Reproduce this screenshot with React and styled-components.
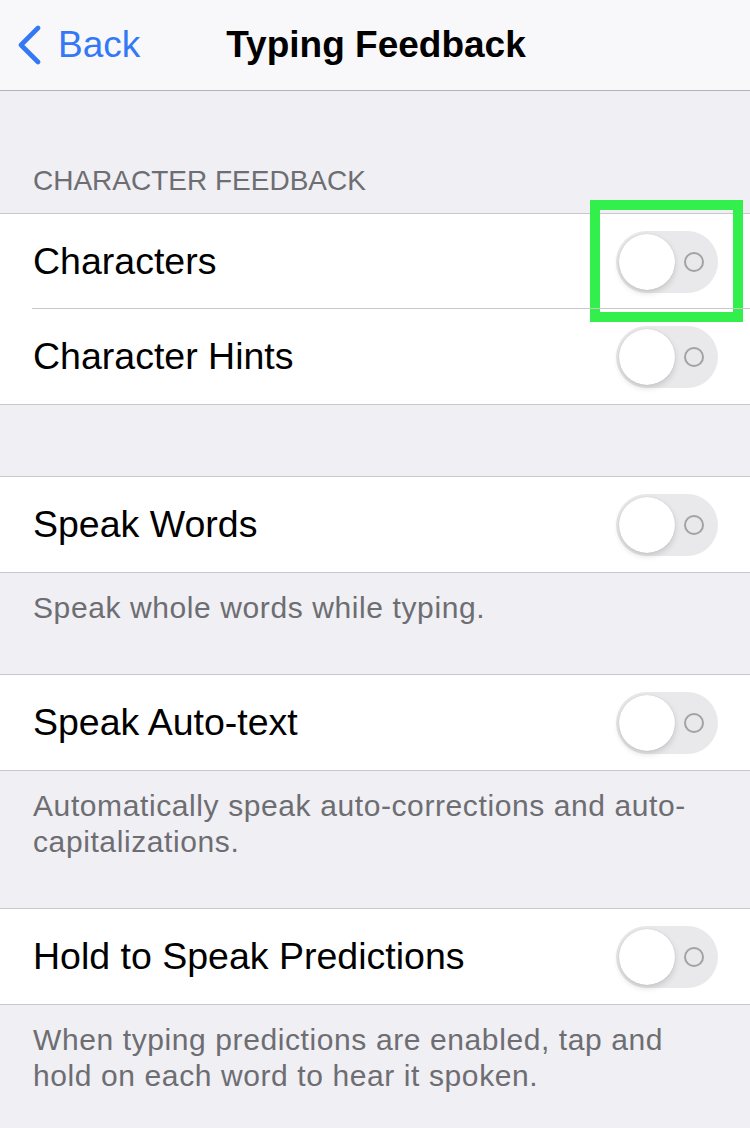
import React from "react";
import styled, { createGlobalStyle } from "styled-components";

const GlobalStyle = createGlobalStyle`
  html, body {
    margin: 0;
    padding: 0;
    background: #efeff4;
  }
  body {
    font-family: "Liberation Sans", Arial, sans-serif;
    -webkit-font-smoothing: antialiased;
  }
`;

const sections = [
  {
    header: "CHARACTER FEEDBACK",
    rows: [{ label: "Characters", highlight: true }, { label: "Character Hints" }],
  },
  {
    rows: [{ label: "Speak Words" }],
    footer: "Speak whole words while typing.",
  },
  {
    rows: [{ label: "Speak Auto-text" }],
    footer: "Automatically speak auto-corrections and auto-capitalizations.",
  },
  {
    rows: [{ label: "Hold to Speak Predictions" }],
    footer:
      "When typing predictions are enabled, tap and hold on each word to hear it spoken.",
  },
];

const App = () => {
  return (
    <Page>
      <GlobalStyle />
      <NavBar>
        <BackButton>
          <svg width="26" height="40" viewBox="0 0 26 40">
            <path
              d="M22 3 L5 20 L22 37"
              fill="none"
              stroke="#3478f6"
              strokeWidth="4.6"
              strokeLinecap="round"
              strokeLinejoin="round"
            />
          </svg>
          <span>Back</span>
        </BackButton>
        <Title>Typing Feedback</Title>
      </NavBar>

      {sections.map((section, i) => (
        <Section key={i} spaced={i > 0 && !sections[i - 1].footer}>
          {section.header && <SectionHeader>{section.header}</SectionHeader>}
          <Group>
            {section.rows.map((row, j) => (
              <Row key={j} last={j === section.rows.length - 1}>
                <Label>{row.label}</Label>
                <Toggle>
                  <Knob />
                  <OffMark />
                  {row.highlight && <Highlight />}
                </Toggle>
              </Row>
            ))}
          </Group>
          {section.footer && <Footer>{section.footer}</Footer>}
        </Section>
      ))}
    </Page>
  );
};

const Page = styled.div`
  width: 750px;
  min-height: 1128px;
  background: #efeff4;
  overflow: hidden;
`;

const NavBar = styled.div`
  position: relative;
  height: 90px;
  background: #f8f8fa;
  border-bottom: 1px solid #b4b4b8;
  display: flex;
  align-items: center;
  justify-content: center;
`;

const BackButton = styled.div`
  position: absolute;
  left: 16px;
  top: 24px;
  display: flex;
  align-items: center;
  gap: 16px;
  color: #3478f6;
  font-size: 37px;
`;

const Title = styled.div`
  font-size: 37px;
  font-weight: 700;
  color: #000;
  margin-left: 2px;
  margin-top: -1px;
`;

const Section = styled.div`
  padding-top: ${(p) => (p.spaced ? "71px" : "0")};
`;

const SectionHeader = styled.div`
  height: 122px;
  box-sizing: border-box;
  display: flex;
  align-items: flex-end;
  padding: 0 33px 16px;
  font-size: 28px;
  color: #6d6d72;
`;

const Group = styled.div`
  background: #fff;
  border-top: 1px solid #c8c7cc;
  border-bottom: 1px solid #c8c7cc;
`;

const Row = styled.div`
  position: relative;
  height: 95px;
  display: flex;
  align-items: center;
  justify-content: space-between;
  padding: 0 32px 0 33px;
  box-sizing: border-box;
  &::after {
    content: "";
    display: ${(p) => (p.last ? "none" : "block")};
    position: absolute;
    left: 32px;
    right: 0;
    bottom: 0;
    height: 1px;
    background: #c8c7cc;
  }
`;

const Label = styled.div`
  font-size: 37.5px;
  color: #000;
`;

const Toggle = styled.div`
  position: relative;
  width: 102px;
  height: 62px;
  border-radius: 31px;
  background: #e9e9eb;
  flex-shrink: 0;
`;

const Knob = styled.div`
  position: absolute;
  left: 3px;
  top: 3px;
  width: 56px;
  height: 56px;
  border-radius: 50%;
  background: #fff;
  box-shadow: 0 3px 6px rgba(0, 0, 0, 0.15), 0 0 1px rgba(0, 0, 0, 0.2);
`;

const OffMark = styled.div`
  position: absolute;
  left: 68px;
  top: 21px;
  width: 16px;
  height: 16px;
  border-radius: 50%;
  border: 2px solid #a2a2a6;
`;

const Highlight = styled.div`
  position: absolute;
  left: -26px;
  right: -25px;
  top: -31px;
  bottom: -29px;
  border: 10px solid #32ef4b;
`;

const Footer = styled.div`
  padding: 17px 33px 48px;
  font-size: 30px;
  line-height: 36px;
  letter-spacing: 0.6px;
  color: #6d6d72;
`;

export default App;
